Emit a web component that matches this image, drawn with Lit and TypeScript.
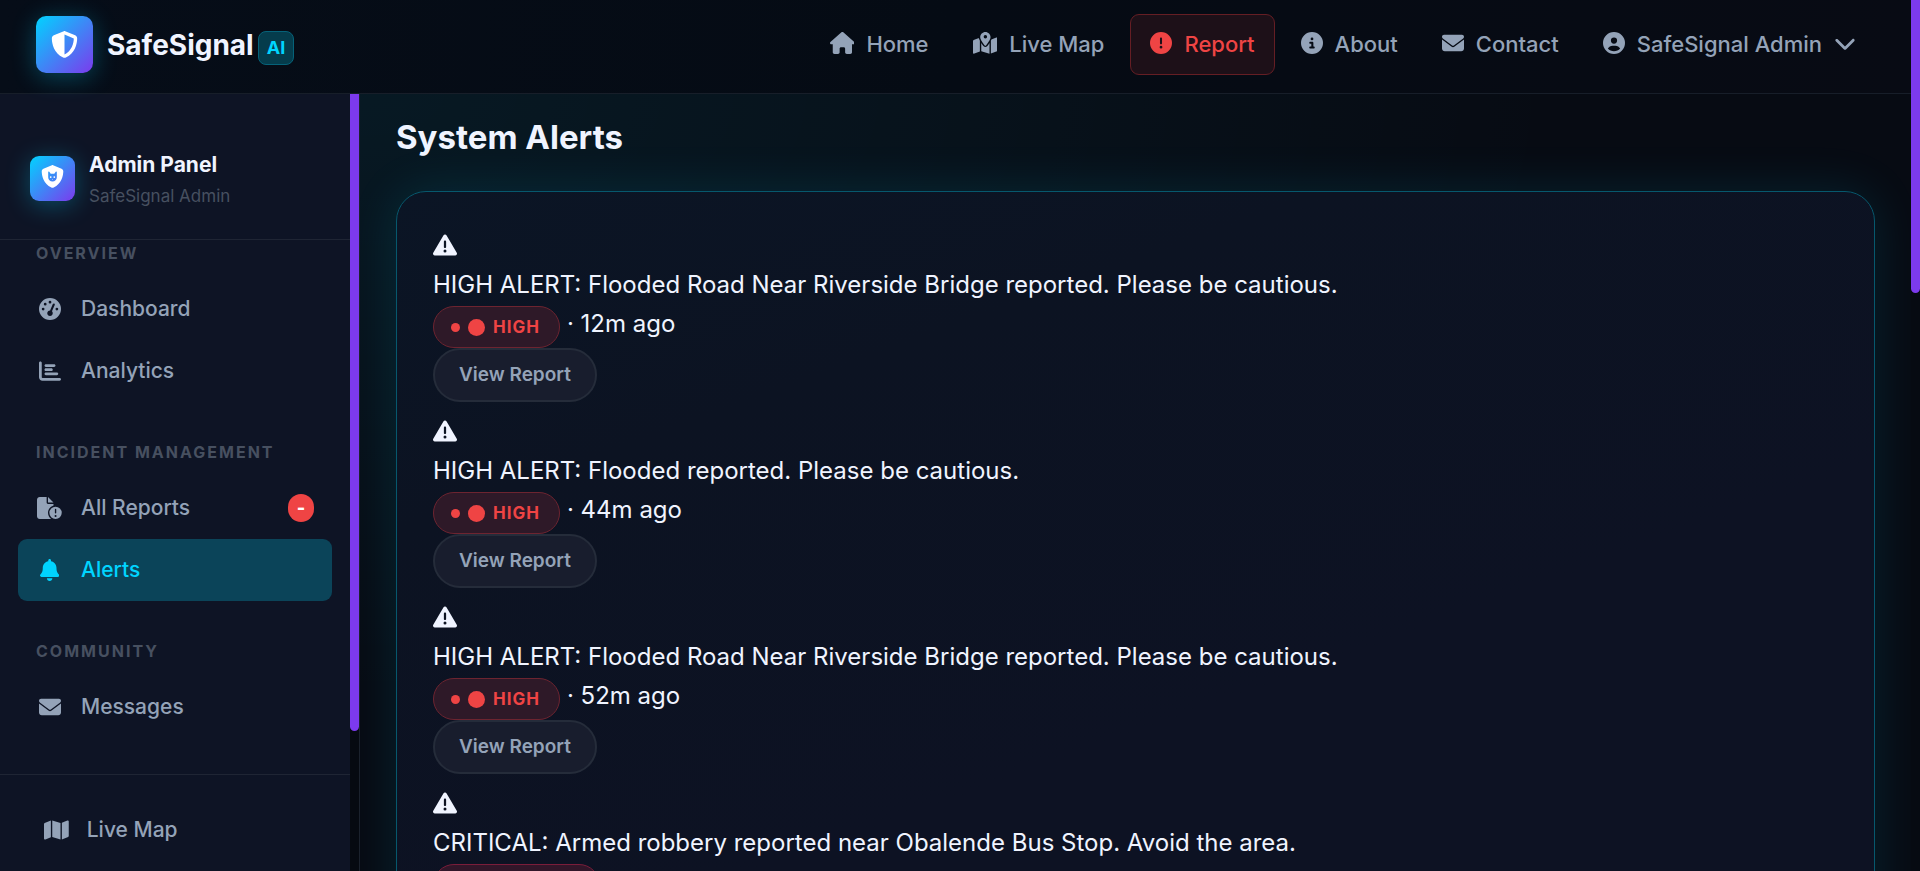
import { LitElement, html, css, svg } from "lit";
import { customElement, property, state } from "lit/decorators.js";
import { classMap } from "lit/directives/class-map.js";

const ICONS: Record<string, [number, string]> = {
  shieldHalf: [512, "M256 0c4.6 0 9.2 1 13.4 2.9L457.7 82.8c22 9.3 38.4 31 38.3 57.2c-.5 99.2-41.3 280.7-213.6 363.2c-16.7 8-36.1 8-52.8 0C57.3 420.7 16.5 239.2 16 140c-.1-26.2 16.3-47.9 38.3-57.2L242.7 2.9C246.8 1 251.4 0 256 0zm0 66.8V444.8C394 378 431.1 230.1 432 141.4L256 66.8l0 0z"],
  shieldCat: [512, "M256 0c4.6 0 9.2 1 13.4 2.9L457.7 82.8c22 9.3 38.4 31 38.3 57.2c-.5 99.2-41.3 280.7-213.6 363.2c-16.7 8-36.1 8-52.8 0C57.3 420.7 16.5 239.2 16 140c-.1-26.2 16.3-47.9 38.3-57.2L242.7 2.9C246.8 1 251.4 0 256 0zM160 154.4V272c0 53 43 96 96 96s96-43 96-96V154.4c0-10-12-15-19-8L296 192H216L179 146.4c-7-7-19-2-19 8zM216 288a20 20 0 1 1 0-40 20 20 0 1 1 0 40zm80-40a20 20 0 1 1 0 40 20 20 0 1 1 0-40zm-52 64h24l-12 16z"],
  home: [576, "M575.8 255.5c0 18-15 32.1-32 32.1h-32l.7 160.2c0 2.7-.2 5.4-.5 8.1V472c0 22.1-17.9 40-40 40H456c-1.1 0-2.2 0-3.3-.1c-1.4 .1-2.8 .1-4.2 .1H416 392c-22.1 0-40-17.9-40-40V448 384c0-17.7-14.3-32-32-32H256c-17.7 0-32 14.3-32 32v64 24c0 22.1-17.9 40-40 40H160 128.1c-1.5 0-3-.1-4.5-.2c-1.2 .1-2.4 .2-3.6 .2H104c-22.1 0-40-17.9-40-40V360c0-.9 0-1.9 .1-2.8V287.6H32c-18 0-32-14-32-32.1c0-9 3-17 10-24L266.4 8c7-7 15-8 22-8s15 2 21 7L564.8 231.5c8 7 12 15 11 24z"],
  mapPin: [576, "M408 120c0 54.6-73.1 151.9-105.2 192c-7.7 9.6-22 9.6-29.6 0C241.1 271.9 168 174.6 168 120C168 53.7 221.7 0 288 0s120 53.7 120 120zm8 80.4c3.5-6.9 6.7-13.8 9.6-20.6c.5-1.2 1-2.5 1.5-3.7l116-46.4C558.9 123.4 576 135 576 152V422.8c0 9.8-6 18.6-15.1 22.3L416 503V200.4zM137.6 138.3c2.4 14.1 7.2 28.3 12.8 41.5c2.9 6.8 6.1 13.7 9.6 20.6V451.8L32.9 502.7C17.1 509 0 497.4 0 480.4V209.6c0-9.8 6-18.6 15.1-22.3l122.6-49zM327.8 332c13.9-17.4 35.7-45.7 56.2-77V504.3L192 449.4V255c20.5 31.3 42.3 59.6 56.2 77c20.5 25.6 59.1 25.6 79.6 0zM288 152a40 40 0 1 0 0-80 40 40 0 1 0 0 80z"],
  alert: [512, "M256 512A256 256 0 1 0 256 0a256 256 0 1 0 0 512zm0-384c13.3 0 24 10.7 24 24V264c0 13.3-10.7 24-24 24s-24-10.7-24-24V152c0-13.3 10.7-24 24-24zM224 352a32 32 0 1 1 64 0 32 32 0 1 1 -64 0z"],
  info: [512, "M256 512A256 256 0 1 0 256 0a256 256 0 1 0 0 512zM216 336h24V272H216c-13.3 0-24-10.7-24-24s10.7-24 24-24h48c13.3 0 24 10.7 24 24v88h8c13.3 0 24 10.7 24 24s-10.7 24-24 24H216c-13.3 0-24-10.7-24-24s10.7-24 24-24zm40-208a32 32 0 1 1 0 64 32 32 0 1 1 0-64z"],
  mail: [512, "M48 64C21.5 64 0 85.5 0 112c0 15.1 7.1 29.3 19.2 38.4L236.8 313.6c11.4 8.5 27 8.5 38.4 0L492.8 150.4c12.1-9.1 19.2-23.3 19.2-38.4c0-26.5-21.5-48-48-48H48zM0 176V384c0 35.3 28.7 64 64 64H448c35.3 0 64-28.7 64-64V176L294.4 339.2c-22.8 17.1-54 17.1-76.8 0L0 176z"],
  user: [512, "M399 384.2C376.9 345.8 335.4 320 288 320H224c-47.4 0-88.9 25.8-111 64.2c35.2 39.2 86.2 63.8 143 63.8s107.8-24.7 143-63.8zM0 256a256 256 0 1 1 512 0A256 256 0 1 1 0 256zm256 16a72 72 0 1 0 0-144 72 72 0 1 0 0 144z"],
  chevron: [512, "M233.4 406.6c12.5 12.5 32.8 12.5 45.3 0l192-192c12.5-12.5 12.5-32.8 0-45.3s-32.8-12.5-45.3 0L256 338.7 86.6 169.4c-12.5-12.5-32.8-12.5-45.3 0s-12.5 32.8 0 45.3l192 192z"],
  gauge: [512, "M0 256a256 256 0 1 1 512 0A256 256 0 1 1 0 256zM288 96a32 32 0 1 0 -64 0 32 32 0 1 0 64 0zM256 416c35.3 0 64-28.7 64-64c0-17.4-6.9-33.1-18.1-44.6L366 161.7c5.3-12.1-.2-26.3-12.3-31.6s-26.3 .2-31.6 12.3L257.9 288c-.6 0-1.3 0-1.9 0c-35.3 0-64 28.7-64 64s28.7 64 64 64zM176 144a32 32 0 1 0 -64 0 32 32 0 1 0 64 0zM96 288a32 32 0 1 0 0-64 32 32 0 1 0 0 64zm352-32a32 32 0 1 0 -64 0 32 32 0 1 0 64 0z"],
  chart: [512, "M32 32c17.7 0 32 14.3 32 32V400c0 8.8 7.2 16 16 16H480c17.7 0 32 14.3 32 32s-14.3 32-32 32H80c-44.2 0-80-35.8-80-80V64C0 46.3 14.3 32 32 32zm96 96c0-17.7 14.3-32 32-32l192 0c17.7 0 32 14.3 32 32s-14.3 32-32 32H160c-17.7 0-32-14.3-32-32zm32 64H288c17.7 0 32 14.3 32 32s-14.3 32-32 32H160c-17.7 0-32-14.3-32-32s14.3-32 32-32zm0 96H416c17.7 0 32 14.3 32 32s-14.3 32-32 32H160c-17.7 0-32-14.3-32-32s14.3-32 32-32z"],
  file: [576, "M0 64C0 28.7 28.7 0 64 0H224V128c0 17.7 14.3 32 32 32H384v38.6C310.1 219.5 256 287.4 256 368c0 59.1 29.1 111.3 73.7 143.3c-3.2 .5-6.4 .7-9.7 .7H64c-35.3 0-64-28.7-64-64V64zm384 64H256V0L384 128zm48 96a144 144 0 1 1 0 288 144 144 0 1 1 0-288zm0 240a24 24 0 1 0 0-48 24 24 0 1 0 0 48zm0-192c-8.8 0-16 7.2-16 16v80c0 8.8 7.2 16 16 16s16-7.2 16-16V288c0-8.8-7.2-16-16-16z"],
  bell: [448, "M224 0c-17.7 0-32 14.3-32 32V51.2C119 66 64 130.6 64 208v18.8c0 47-17.3 92.4-48.5 127.6l-7.4 8.3c-8.4 9.4-10.4 22.9-5.3 34.4S19.4 416 32 416H416c12.6 0 24-7.4 29.2-18.9s3.1-25-5.3-34.4l-7.4-8.3C401.3 319.2 384 273.9 384 226.8V208c0-77.4-55-142-128-156.8V32c0-17.7-14.3-32-32-32zm45.3 493.3c12-12 18.7-28.3 18.7-45.3H224 160c0 17 6.7 33.3 18.7 45.3s28.3 18.7 45.3 18.7s33.3-6.7 45.3-18.7z"],
  map: [576, "M384 476.1L192 421.2V35.9L384 90.8V476.1zm32-1.2V88.4L543.1 37.5c15.8-6.3 32.9 5.3 32.9 22.3V394.6c0 9.8-6 18.6-15.1 22.3L416 474.8zM15.1 95.1L160 37.2V423.6L32.9 474.5C17.1 480.8 0 469.2 0 452.2V117.4c0-9.8 6-18.6 15.1-22.3z"],
  warning: [512, "M256 32c14.2 0 27.3 7.5 34.5 19.8l216 368c7.3 12.4 7.3 27.7 .2 40.1S486.3 480 472 480H40c-14.3 0-27.6-7.7-34.7-20.1s-7-27.8 .2-40.1l216-368C228.7 39.5 241.8 32 256 32zm0 128c-13.3 0-24 10.7-24 24V296c0 13.3 10.7 24 24 24s24-10.7 24-24V184c0-13.3-10.7-24-24-24zm32 224a32 32 0 1 0 -64 0 32 32 0 1 0 64 0z"],
};

@customElement("ss-icon")
export class SsIcon extends LitElement {
  @property() name = "";
  @property({ type: Number }) size = 22;

  static styles = css`
    :host { display: inline-flex; flex: none; }
    svg { display: block; fill: currentColor; fill-rule: evenodd; }
  `;

  render() {
    const [w, d] = ICONS[this.name];
    return html`<svg aria-hidden="true" width=${(this.size * w) / 512} height=${this.size} viewBox="0 0 ${w} 512">
      ${svg`<path d=${d}></path>`}
    </svg>`;
  }
}

@customElement("ss-header")
export class SsHeader extends LitElement {
  private links = [
    { icon: "home", label: "Home" },
    { icon: "mapPin", label: "Live Map" },
    { icon: "alert", label: "Report" },
    { icon: "info", label: "About" },
    { icon: "mail", label: "Contact" },
  ];

  static styles = css`
    :host { display: block; }
    .bar {
      display: flex; align-items: center; justify-content: space-between;
      padding: 14px 35px 18px 36px; border-bottom: 1px solid #171e29;
      background: linear-gradient(90deg, #060d18, #050b14 50%, #080b14);
    }
    .brand { display: flex; align-items: center; color: #f0f4ff; text-decoration: none; }
    .logo {
      display: grid; place-items: center; width: 57px; height: 57px; margin: 2px 14px 2px 0;
      border-radius: 10px; color: #fff;
      background: linear-gradient(135deg, #00d4ff, #7c3aed);
      box-shadow: 0 4px 24px rgba(0, 212, 255, 0.3);
    }
    .name { font: 700 28px/36px "Inter", sans-serif; }
    .tag {
      margin: 6px 0 0 4px; padding: 0 8px; border: 1px solid #056279; border-radius: 8px;
      background: #053c4c; color: #00d4ff; font: 700 18px/32px "Inter", sans-serif;
    }
    nav { display: flex; gap: 4px; }
    .link {
      display: flex; align-items: center; gap: 12px; padding: 0 19px; border: 1px solid transparent;
      border-radius: 9px; background: none; color: #94a3b8; text-decoration: none;
      font: 500 22px/59px "Inter", sans-serif;
    }
    .link.report { margin: 0 2px; color: #ef4444; border-color: #651e24; background: #1d1018; }
    ss-icon { margin-bottom: 3px; }
    .logo ss-icon { margin: 0; }
  `;

  render() {
    return html`<header class="bar">
      <a class="brand" href="#">
        <span class="logo"><ss-icon name="shieldHalf" size="27"></ss-icon></span>
        <span class="name">SafeSignal</span><span class="tag">AI</span>
      </a>
      <nav aria-label="Main">
        ${this.links.map(
          (l) => html`<a href="#" class=${classMap({ link: true, report: l.label === "Report" })}>
            <ss-icon name=${l.icon} size="22"></ss-icon>${l.label}</a>`
        )}
        <button class="link" type="button">
          <ss-icon name="user" size="22"></ss-icon>SafeSignal Admin<ss-icon name="chevron" size="22"></ss-icon>
        </button>
      </nav>
    </header>`;
  }
}

@customElement("ss-sidebar")
export class SsSidebar extends LitElement {
  @state() private current = "Alerts";

  private groups = [
    { title: "Overview", items: [{ icon: "gauge", label: "Dashboard" }, { icon: "chart", label: "Analytics" }] },
    {
      title: "Incident Management",
      items: [{ icon: "file", label: "All Reports", count: "-" }, { icon: "bell", label: "Alerts" }],
    },
    { title: "Community", items: [{ icon: "mail", label: "Messages" }] },
  ] as { title: string; items: { icon: string; label: string; count?: string }[] }[];

  static styles = css`
    :host { display: flex; min-height: 0; border-right: 1px solid #1b222d; background: #060a11; }
    aside { flex: 1; display: flex; flex-direction: column; background: #0e1425; overflow: hidden; }
    .track { width: 9px; }
    .thumb { height: 82%; border-radius: 0 0 5px 5px; background: #7c3aed; }
    .profile {
      display: flex; flex: none; align-items: center; gap: 14px; padding: 54px 30px 29px;
      border-bottom: 1px solid #1f2534;
    }
    .badge {
      display: grid; place-items: center; width: 45px; height: 45px; margin-bottom: 2px; border-radius: 9px; color: #fff;
      background: linear-gradient(135deg, #00d4ff, #7c3aed); box-shadow: 0 4px 24px rgba(0, 212, 255, 0.3);
    }
    .badge ss-icon { margin-bottom: 4px; }
    .title { margin: 0; color: #f0f4ff; font: 700 21px/34px "Inter", sans-serif; }
    .who { margin: 0; color: #475060; font: 400 17px/28px "Inter", sans-serif; }
    .menu { flex: 1 0 auto; padding: 0 18px; }
    .group { margin-bottom: 37px; }
    .group:last-child { margin-bottom: 36px; }
    h3 {
      margin: 0 0 12px; padding: 0 18px; color: #475060; text-transform: uppercase; letter-spacing: 2px;
      font: 700 16px/26px "Inter", sans-serif;
    }
    .item {
      display: flex; align-items: center; gap: 18px; height: 62px; padding: 0 18px; border-radius: 9px;
      color: #94a3b8; text-decoration: none; font: 500 21px/32px "Inter", sans-serif;
    }
    .item.on { background: #0b4459; color: #00d4ff; }
    .glyph { display: grid; place-items: center; width: 27px; }
    .count {
      margin-left: auto; width: 26px; border-radius: 13px; background: #ef4444; color: #fff; text-align: center;
      font: 800 18px/28px "Inter", sans-serif;
    }
    .foot { flex: none; padding: 24px 26px; border-top: 1px solid #1f2534; }
  `;

  render() {
    return html`<aside>
        <div class="profile">
          <span class="badge"><ss-icon name="shieldCat" size="23"></ss-icon></span>
          <div>
            <p class="title">Admin Panel</p>
            <p class="who">SafeSignal Admin</p>
          </div>
        </div>
        <nav class="menu" aria-label="Admin">
          ${this.groups.map(
            (g) => html`<section class="group">
              <h3>${g.title}</h3>
              ${g.items.map(
                (i) => html`<a
                  href="#"
                  class=${classMap({ item: true, on: i.label === this.current })}
                  @click=${(e: Event) => { e.preventDefault(); this.current = i.label; }}
                  ><span class="glyph"><ss-icon name=${i.icon} size="22"></ss-icon></span>${i.label}
                  ${i.count ? html`<span class="count">${i.count}</span>` : ""}</a
                >`
              )}
            </section>`
          )}
        </nav>
        <div class="foot">
          <a class="item" href="#"><ss-icon name="map" size="22"></ss-icon>Live Map</a>
        </div>
      </aside>
      <div class="track"><div class="thumb"></div></div>`;
  }
}

@customElement("ss-alerts")
export class SsAlerts extends LitElement {
  private alerts = [
    { text: "HIGH ALERT: Flooded Road Near Riverside Bridge reported. Please be cautious.", level: "High", age: "12m ago" },
    { text: "HIGH ALERT: Flooded reported. Please be cautious.", level: "High", age: "44m ago" },
    { text: "HIGH ALERT: Flooded Road Near Riverside Bridge reported. Please be cautious.", level: "High", age: "52m ago" },
    { text: "CRITICAL: Armed robbery reported near Obalende Bus Stop. Avoid the area.", level: "Critical", age: "1h ago" },
  ];

  static styles = css`
    :host { display: block; padding: 22px 36px; color: #f0f4ff; }
    h1 { margin: 0 0 33px; font: 700 33px/42px "Inter", sans-serif; }
    .card {
      padding: 36px; border: 1px solid #06586d; border-radius: 30px;
      background: linear-gradient(160deg, #0b1525, #0c1322 25%, #0d1223 60%);
      box-shadow: 0 0 50px rgba(0, 212, 255, 0.12);
    }
    .alert { margin-bottom: 12px; font: 400 24px/38px "Inter", sans-serif; }
    .sign { display: flex; align-items: center; height: 34px; padding-bottom: 4px; }
    p { margin: 0; }
    .meta { display: flex; align-items: flex-start; gap: 7px; height: 44px; line-height: 40px; }
    .pill {
      display: flex; align-items: center; gap: 8px; margin-top: 2px; padding: 0 19px 0 17px; border: 1px solid #6d2430;
      border-radius: 21px; background: #2e1928; color: #ef4444; text-transform: uppercase; letter-spacing: 1px;
      font: 700 17px/40px "Inter", sans-serif;
    }
    .pill.critical { border-color: #7a1d3a; background: #311629; color: #ff2d55; }
    .dot { width: 9px; height: 9px; border-radius: 50%; background: currentColor; }
    .ball { width: 17px; height: 17px; border-radius: 50%; background: currentColor; }
    button {
      display: block; height: 54px; padding: 0 24px; border: 2px solid #252c3a; border-radius: 27px;
      background: #181d2d; color: #94a3b8; font: 600 19px/50px "Inter", sans-serif;
    }
  `;

  render() {
    return html`<h1>System Alerts</h1>
      <section class="card">
        ${this.alerts.map(
          (a) => html`<article class="alert">
            <div class="sign"><ss-icon name="warning" size="24"></ss-icon></div>
            <p>${a.text}</p>
            <div class="meta">
              <span class=${classMap({ pill: true, critical: a.level === "Critical" })}
                ><span class="dot"></span><span class="ball"></span>${a.level}</span
              >
              <span>· ${a.age}</span>
            </div>
            <button type="button">View Report</button>
          </article>`
        )}
      </section>`;
  }
}

@customElement("app-root")
export class AppRoot extends LitElement {
  static styles = css`
    :host {
      display: grid; grid-template-columns: minmax(0, 1fr) 9px; height: 100vh; overflow: hidden; background: #060a12;
    }
    .page { display: grid; grid-template-rows: auto minmax(0, 1fr); height: 100vh; }
    .body { display: grid; grid-template: minmax(0, 1fr) / 360px minmax(0, 1fr); min-height: 0; }
    main {
      overflow: hidden;
      background: radial-gradient(ellipse at 0% 0%, rgba(0, 212, 255, 0.07), transparent 55%), #070b13;
    }
    ss-header { position: relative; z-index: 1; }
    .track { background: #060a12; }
    .thumb { height: 293px; border-radius: 0 0 5px 5px; background: #7c3aed; }
  `;

  render() {
    return html`<div class="page">
        <ss-header></ss-header>
        <div class="body">
          <ss-sidebar></ss-sidebar>
          <main><ss-alerts></ss-alerts></main>
        </div>
      </div>
      <div class="track"><div class="thumb"></div></div>`;
  }
}
